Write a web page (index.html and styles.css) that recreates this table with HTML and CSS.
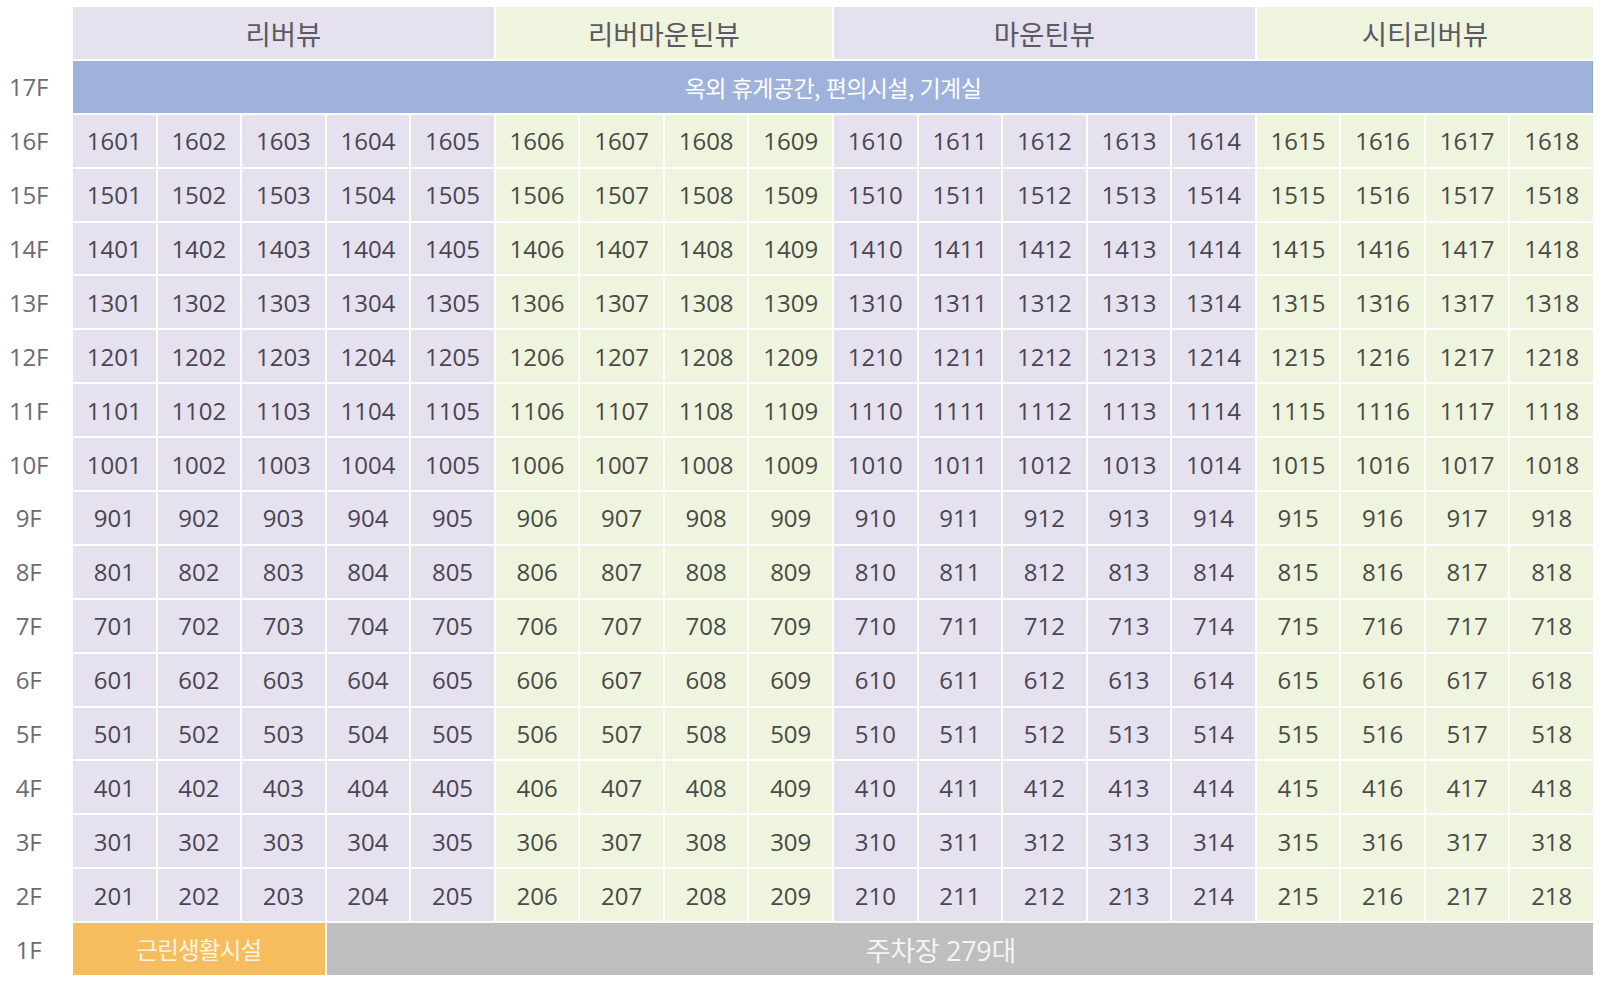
FILE: index.html
```html
<!DOCTYPE html>
<html lang="ko">
<head>
<meta charset="utf-8">
<title>동호수 배치도</title>
<link rel="stylesheet" href="styles.css">
</head>
<body>
<div class="board">
  <div class="lbl"></div>
  <div class="head p span5">리버뷰</div>
  <div class="head g span4">리버마운틴뷰</div>
  <div class="head p span5">마운틴뷰</div>
  <div class="head g span4">시티리버뷰</div>

  <div class="lbl">17F</div>
  <div class="roof">옥외 휴게공간, 편의시설, 기계실</div>

  <div class="lbl">16F</div>
  <div class="c p">1601</div><div class="c p">1602</div><div class="c p">1603</div><div class="c p">1604</div><div class="c p">1605</div>
  <div class="c g">1606</div><div class="c g">1607</div><div class="c g">1608</div><div class="c g">1609</div>
  <div class="c p">1610</div><div class="c p">1611</div><div class="c p">1612</div><div class="c p">1613</div><div class="c p">1614</div>
  <div class="c g">1615</div><div class="c g">1616</div><div class="c g">1617</div><div class="c g">1618</div>

  <div class="lbl">15F</div>
  <div class="c p">1501</div><div class="c p">1502</div><div class="c p">1503</div><div class="c p">1504</div><div class="c p">1505</div>
  <div class="c g">1506</div><div class="c g">1507</div><div class="c g">1508</div><div class="c g">1509</div>
  <div class="c p">1510</div><div class="c p">1511</div><div class="c p">1512</div><div class="c p">1513</div><div class="c p">1514</div>
  <div class="c g">1515</div><div class="c g">1516</div><div class="c g">1517</div><div class="c g">1518</div>

  <div class="lbl">14F</div>
  <div class="c p">1401</div><div class="c p">1402</div><div class="c p">1403</div><div class="c p">1404</div><div class="c p">1405</div>
  <div class="c g">1406</div><div class="c g">1407</div><div class="c g">1408</div><div class="c g">1409</div>
  <div class="c p">1410</div><div class="c p">1411</div><div class="c p">1412</div><div class="c p">1413</div><div class="c p">1414</div>
  <div class="c g">1415</div><div class="c g">1416</div><div class="c g">1417</div><div class="c g">1418</div>

  <div class="lbl">13F</div>
  <div class="c p">1301</div><div class="c p">1302</div><div class="c p">1303</div><div class="c p">1304</div><div class="c p">1305</div>
  <div class="c g">1306</div><div class="c g">1307</div><div class="c g">1308</div><div class="c g">1309</div>
  <div class="c p">1310</div><div class="c p">1311</div><div class="c p">1312</div><div class="c p">1313</div><div class="c p">1314</div>
  <div class="c g">1315</div><div class="c g">1316</div><div class="c g">1317</div><div class="c g">1318</div>

  <div class="lbl">12F</div>
  <div class="c p">1201</div><div class="c p">1202</div><div class="c p">1203</div><div class="c p">1204</div><div class="c p">1205</div>
  <div class="c g">1206</div><div class="c g">1207</div><div class="c g">1208</div><div class="c g">1209</div>
  <div class="c p">1210</div><div class="c p">1211</div><div class="c p">1212</div><div class="c p">1213</div><div class="c p">1214</div>
  <div class="c g">1215</div><div class="c g">1216</div><div class="c g">1217</div><div class="c g">1218</div>

  <div class="lbl">11F</div>
  <div class="c p">1101</div><div class="c p">1102</div><div class="c p">1103</div><div class="c p">1104</div><div class="c p">1105</div>
  <div class="c g">1106</div><div class="c g">1107</div><div class="c g">1108</div><div class="c g">1109</div>
  <div class="c p">1110</div><div class="c p">1111</div><div class="c p">1112</div><div class="c p">1113</div><div class="c p">1114</div>
  <div class="c g">1115</div><div class="c g">1116</div><div class="c g">1117</div><div class="c g">1118</div>

  <div class="lbl">10F</div>
  <div class="c p">1001</div><div class="c p">1002</div><div class="c p">1003</div><div class="c p">1004</div><div class="c p">1005</div>
  <div class="c g">1006</div><div class="c g">1007</div><div class="c g">1008</div><div class="c g">1009</div>
  <div class="c p">1010</div><div class="c p">1011</div><div class="c p">1012</div><div class="c p">1013</div><div class="c p">1014</div>
  <div class="c g">1015</div><div class="c g">1016</div><div class="c g">1017</div><div class="c g">1018</div>

  <div class="lbl">9F</div>
  <div class="c p">901</div><div class="c p">902</div><div class="c p">903</div><div class="c p">904</div><div class="c p">905</div>
  <div class="c g">906</div><div class="c g">907</div><div class="c g">908</div><div class="c g">909</div>
  <div class="c p">910</div><div class="c p">911</div><div class="c p">912</div><div class="c p">913</div><div class="c p">914</div>
  <div class="c g">915</div><div class="c g">916</div><div class="c g">917</div><div class="c g">918</div>

  <div class="lbl">8F</div>
  <div class="c p">801</div><div class="c p">802</div><div class="c p">803</div><div class="c p">804</div><div class="c p">805</div>
  <div class="c g">806</div><div class="c g">807</div><div class="c g">808</div><div class="c g">809</div>
  <div class="c p">810</div><div class="c p">811</div><div class="c p">812</div><div class="c p">813</div><div class="c p">814</div>
  <div class="c g">815</div><div class="c g">816</div><div class="c g">817</div><div class="c g">818</div>

  <div class="lbl">7F</div>
  <div class="c p">701</div><div class="c p">702</div><div class="c p">703</div><div class="c p">704</div><div class="c p">705</div>
  <div class="c g">706</div><div class="c g">707</div><div class="c g">708</div><div class="c g">709</div>
  <div class="c p">710</div><div class="c p">711</div><div class="c p">712</div><div class="c p">713</div><div class="c p">714</div>
  <div class="c g">715</div><div class="c g">716</div><div class="c g">717</div><div class="c g">718</div>

  <div class="lbl">6F</div>
  <div class="c p">601</div><div class="c p">602</div><div class="c p">603</div><div class="c p">604</div><div class="c p">605</div>
  <div class="c g">606</div><div class="c g">607</div><div class="c g">608</div><div class="c g">609</div>
  <div class="c p">610</div><div class="c p">611</div><div class="c p">612</div><div class="c p">613</div><div class="c p">614</div>
  <div class="c g">615</div><div class="c g">616</div><div class="c g">617</div><div class="c g">618</div>

  <div class="lbl">5F</div>
  <div class="c p">501</div><div class="c p">502</div><div class="c p">503</div><div class="c p">504</div><div class="c p">505</div>
  <div class="c g">506</div><div class="c g">507</div><div class="c g">508</div><div class="c g">509</div>
  <div class="c p">510</div><div class="c p">511</div><div class="c p">512</div><div class="c p">513</div><div class="c p">514</div>
  <div class="c g">515</div><div class="c g">516</div><div class="c g">517</div><div class="c g">518</div>

  <div class="lbl">4F</div>
  <div class="c p">401</div><div class="c p">402</div><div class="c p">403</div><div class="c p">404</div><div class="c p">405</div>
  <div class="c g">406</div><div class="c g">407</div><div class="c g">408</div><div class="c g">409</div>
  <div class="c p">410</div><div class="c p">411</div><div class="c p">412</div><div class="c p">413</div><div class="c p">414</div>
  <div class="c g">415</div><div class="c g">416</div><div class="c g">417</div><div class="c g">418</div>

  <div class="lbl">3F</div>
  <div class="c p">301</div><div class="c p">302</div><div class="c p">303</div><div class="c p">304</div><div class="c p">305</div>
  <div class="c g">306</div><div class="c g">307</div><div class="c g">308</div><div class="c g">309</div>
  <div class="c p">310</div><div class="c p">311</div><div class="c p">312</div><div class="c p">313</div><div class="c p">314</div>
  <div class="c g">315</div><div class="c g">316</div><div class="c g">317</div><div class="c g">318</div>

  <div class="lbl">2F</div>
  <div class="c p">201</div><div class="c p">202</div><div class="c p">203</div><div class="c p">204</div><div class="c p">205</div>
  <div class="c g">206</div><div class="c g">207</div><div class="c g">208</div><div class="c g">209</div>
  <div class="c p">210</div><div class="c p">211</div><div class="c p">212</div><div class="c p">213</div><div class="c p">214</div>
  <div class="c g">215</div><div class="c g">216</div><div class="c g">217</div><div class="c g">218</div>

  <div class="lbl">1F</div>
  <div class="shop">근린생활시설</div>
  <div class="park">주차장 279대</div>
</div>
</body>
</html>
```

FILE: styles.css
```css
html, body {
  margin: 0;
  padding: 0;
  background: #ffffff;
}

body {
  font-family: "Open Sans", "Noto Sans CJK KR", sans-serif;
  color: #4b4851;
}

.board {
  width: 1593px;
  height: 968px;
  margin-top: 7px;
  display: grid;
  grid-template-columns: 71px repeat(18, 1fr);
  grid-template-rows: repeat(18, 1fr);
  gap: 2px;
}

.lbl {
  display: flex;
  align-items: center;
  justify-content: center;
  padding-right: 14px;
  font-size: 24px;
  color: #6d6a71;
  letter-spacing: -0.3px;
}

.c {
  display: flex;
  align-items: center;
  justify-content: center;
  font-size: 24px;
  letter-spacing: 0;
}

.p { background: #e5e1ee; color: #4a4453; }
.g { background: #eef4dd; color: #4a4a45; }

.head {
  display: flex;
  align-items: center;
  justify-content: center;
  font-family: "Noto Sans CJK KR", sans-serif;
  font-size: 27.5px;
  color: #5c5962;
}

.span5 { grid-column: span 5; }
.span4 { grid-column: span 4; }

.roof {
  grid-column: span 18;
  background: #9fb2db;
  color: #ffffff;
  display: flex;
  align-items: center;
  justify-content: center;
  font-family: "Noto Sans CJK KR", sans-serif;
  font-size: 23px;
  letter-spacing: -0.6px;
  box-shadow: inset -1px 0 0 #8fa2c8;
}

.shop {
  grid-column: span 3;
  background: #f6bd5f;
  color: #fdf3e3;
  display: flex;
  align-items: center;
  justify-content: center;
  font-family: "Noto Sans CJK KR", sans-serif;
  font-size: 23.5px;
  letter-spacing: -0.8px;
}

.park {
  grid-column: span 15;
  background: #bebebe;
  color: #f4f4f4;
  display: flex;
  align-items: center;
  justify-content: center;
  padding-right: 38px;
  font-size: 27px;
  letter-spacing: -0.3px;
}
```
